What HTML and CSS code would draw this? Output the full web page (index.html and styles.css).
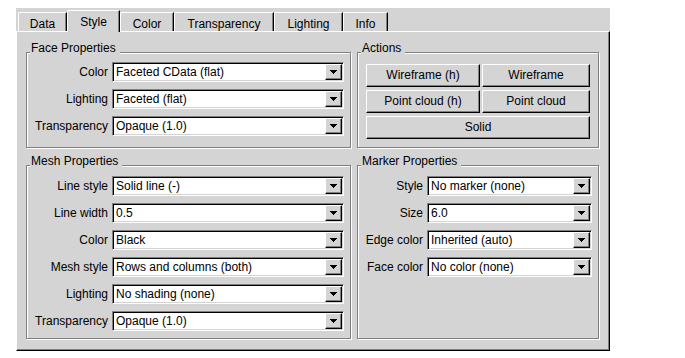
FILE: index.html
```html
<!DOCTYPE html>
<html lang="en">
<head>
    <meta charset="UTF-8">
    <title>Style</title>
    <link rel="stylesheet" href="styles.css">
</head>
<body>

<div class="tabpane">
    <div class="tabs">
        <div class="tab tab-data">Data</div>
        <div class="tab tab-style active">Style</div>
        <div class="tab tab-color">Color</div>
        <div class="tab tab-transparency">Transparency</div>
        <div class="tab tab-lighting">Lighting</div>
        <div class="tab tab-info">Info</div>
    </div>

    <div class="panel">
        <div class="group face">
            <div class="group-title">Face Properties</div>
            <div class="rows">
                <label>Color</label>
                <div class="combo"><span class="combo-text">Faceted CData (flat)</span><span class="combo-btn"><svg width="7" height="4" viewBox="0 0 7 4"><path d="M0 0H7V1H6V2H5V3H4V4H3V3H2V2H1V1H0Z"/></svg></span></div>
                <label>Lighting</label>
                <div class="combo"><span class="combo-text">Faceted (flat)</span><span class="combo-btn"><svg width="7" height="4" viewBox="0 0 7 4"><path d="M0 0H7V1H6V2H5V3H4V4H3V3H2V2H1V1H0Z"/></svg></span></div>
                <label>Transparency</label>
                <div class="combo"><span class="combo-text">Opaque (1.0)</span><span class="combo-btn"><svg width="7" height="4" viewBox="0 0 7 4"><path d="M0 0H7V1H6V2H5V3H4V4H3V3H2V2H1V1H0Z"/></svg></span></div>
            </div>
        </div>

        <div class="group actions">
            <div class="group-title">Actions</div>
            <div class="buttons">
                <div class="btn">Wireframe (h)</div>
                <div class="btn">Wireframe</div>
                <div class="btn">Point cloud (h)</div>
                <div class="btn">Point cloud</div>
                <div class="btn wide">Solid</div>
            </div>
        </div>

        <div class="group mesh">
            <div class="group-title">Mesh Properties</div>
            <div class="rows">
                <label>Line style</label>
                <div class="combo"><span class="combo-text">Solid line (-)</span><span class="combo-btn"><svg width="7" height="4" viewBox="0 0 7 4"><path d="M0 0H7V1H6V2H5V3H4V4H3V3H2V2H1V1H0Z"/></svg></span></div>
                <label>Line width</label>
                <div class="combo"><span class="combo-text">0.5</span><span class="combo-btn"><svg width="7" height="4" viewBox="0 0 7 4"><path d="M0 0H7V1H6V2H5V3H4V4H3V3H2V2H1V1H0Z"/></svg></span></div>
                <label>Color</label>
                <div class="combo"><span class="combo-text">Black</span><span class="combo-btn"><svg width="7" height="4" viewBox="0 0 7 4"><path d="M0 0H7V1H6V2H5V3H4V4H3V3H2V2H1V1H0Z"/></svg></span></div>
                <label>Mesh style</label>
                <div class="combo"><span class="combo-text">Rows and columns (both)</span><span class="combo-btn"><svg width="7" height="4" viewBox="0 0 7 4"><path d="M0 0H7V1H6V2H5V3H4V4H3V3H2V2H1V1H0Z"/></svg></span></div>
                <label>Lighting</label>
                <div class="combo"><span class="combo-text">No shading (none)</span><span class="combo-btn"><svg width="7" height="4" viewBox="0 0 7 4"><path d="M0 0H7V1H6V2H5V3H4V4H3V3H2V2H1V1H0Z"/></svg></span></div>
                <label>Transparency</label>
                <div class="combo"><span class="combo-text">Opaque (1.0)</span><span class="combo-btn"><svg width="7" height="4" viewBox="0 0 7 4"><path d="M0 0H7V1H6V2H5V3H4V4H3V3H2V2H1V1H0Z"/></svg></span></div>
            </div>
        </div>

        <div class="group marker">
            <div class="group-title">Marker Properties</div>
            <div class="rows">
                <label>Style</label>
                <div class="combo"><span class="combo-text">No marker (none)</span><span class="combo-btn"><svg width="7" height="4" viewBox="0 0 7 4"><path d="M0 0H7V1H6V2H5V3H4V4H3V3H2V2H1V1H0Z"/></svg></span></div>
                <label>Size</label>
                <div class="combo"><span class="combo-text">6.0</span><span class="combo-btn"><svg width="7" height="4" viewBox="0 0 7 4"><path d="M0 0H7V1H6V2H5V3H4V4H3V3H2V2H1V1H0Z"/></svg></span></div>
                <label>Edge color</label>
                <div class="combo"><span class="combo-text">Inherited (auto)</span><span class="combo-btn"><svg width="7" height="4" viewBox="0 0 7 4"><path d="M0 0H7V1H6V2H5V3H4V4H3V3H2V2H1V1H0Z"/></svg></span></div>
                <label>Face color</label>
                <div class="combo"><span class="combo-text">No color (none)</span><span class="combo-btn"><svg width="7" height="4" viewBox="0 0 7 4"><path d="M0 0H7V1H6V2H5V3H4V4H3V3H2V2H1V1H0Z"/></svg></span></div>
            </div>
        </div>
    </div>
</div>

</body>
</html>
```

FILE: styles.css
```css
body {
    margin: 0;
    background: #fff;
    font-family: "Liberation Sans", Arial, sans-serif;
    font-size: 12px;
    color: #000;
}
.tabpane {
    width: 594px;
    height: 343px;
    margin: 8px 0 0 16px;
    background: #d4d4d4;
    display: flex;
    flex-direction: column;
}
.tabs {
    height: 23px;
    display: flex;
    align-items: flex-end;
    padding-left: 2px;
    flex-shrink: 0;
}
.tab {
    box-sizing: border-box;
    height: 19px;
    padding-top: 4px;
    line-height: 14px;
    text-align: center;
    border-top: 1px solid #fff;
    border-left: 1px solid #fff;
    border-right: 1px solid #000;
    border-top-left-radius: 2px;
    box-shadow: inset -1px 0 0 #808080;
    background: #d4d4d4;
}
.tab.active {
    height: 22px;
    margin-bottom: -1px;
    position: relative;
    z-index: 1;
}
.tab-data { width: 49px; }
.tab-style { width: 53px; }
.tab-color { width: 54px; }
.tab-transparency { width: 100px; }
.tab-lighting { width: 69px; }
.tab-info { width: 45px; }

.panel {
    flex: 1;
    box-sizing: border-box;
    border-top: 1px solid #fff;
    border-left: 1px solid #fff;
    border-right: 1px solid #000;
    border-bottom: 1px solid #000;
    box-shadow: inset -1px -1px 0 #808080;
    padding: 20px 0 0 9px;
    display: grid;
    grid-template-columns: 325px 242px;
    grid-template-rows: 96px 174px;
    gap: 17px 6px;
}
.group {
    box-sizing: border-box;
    border: 1px solid #808080;
    box-shadow: 1px 1px 0 #fff, inset 1px 1px 0 #fff;
}
.group-title {
    width: fit-content;
    margin: -12px 0 0 3px;
    padding: 0 4px 0 1px;
    line-height: 14px;
    background: #d4d4d4;
}
.rows {
    display: grid;
    grid-template-columns: 75px 1fr;
    grid-auto-rows: 20px;
    gap: 7px 4px;
    padding: 0 6px;
    margin-top: 7px;
}
.mesh .rows,
.marker .rows {
    margin-top: 8px;
}
.marker .rows {
    grid-template-columns: 59px 1fr;
}
.rows label {
    text-align: right;
    line-height: 20px;
    white-space: nowrap;
}
.combo {
    box-sizing: border-box;
    height: 20px;
    display: flex;
    background: #fff;
    border: 1px solid;
    border-color: #808080 #fff #fff #808080;
    box-shadow: inset 1px 1px 0 #000, inset -1px -1px 0 #d4d4d4;
    padding: 1px;
}
.combo-text {
    flex: 1;
    line-height: 16px;
    padding-left: 2px;
    white-space: nowrap;
    overflow: hidden;
}
.combo-btn {
    box-sizing: border-box;
    width: 17px;
    height: 16px;
    display: flex;
    align-items: center;
    justify-content: center;
    background: #d4d4d4;
    border-top: 1px solid #fff;
    border-left: 1px solid #fff;
    border-right: 1px solid #000;
    border-bottom: 1px solid #000;
    box-shadow: inset -1px -1px 0 #808080;
}
.combo-btn svg {
    display: block;
    shape-rendering: crispEdges;
}
.buttons {
    display: grid;
    grid-template-columns: 114px 108px;
    grid-auto-rows: 23px;
    gap: 3px 2px;
    padding-left: 8px;
    margin-top: 9px;
}
.btn {
    box-sizing: border-box;
    text-align: center;
    line-height: 21px;
    border-top: 1px solid #fff;
    border-left: 1px solid #fff;
    border-right: 1px solid #000;
    border-bottom: 1px solid #000;
    box-shadow: inset -1px -1px 0 #808080;
}
.btn.wide {
    grid-column: span 2;
}
```
